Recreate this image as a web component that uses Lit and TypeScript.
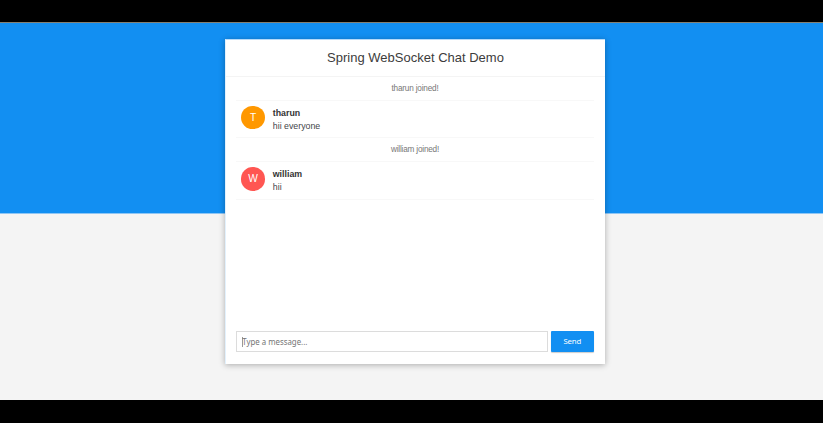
import { LitElement, html, css } from "lit";
import { customElement, state } from "lit/decorators.js";

interface Entry {
  kind: "event" | "chat";
  sender: string;
  text: string;
  tone?: string;
}

@customElement("chat-entry")
class ChatEntry extends LitElement {
  static properties = { entry: { attribute: false } };
  declare entry: Entry;

  static styles = css`
    :host {
      display: block;
      box-sizing: border-box;
      border-bottom: 1px solid #f8f8f8;
    }
    .event {
      height: 23px;
      line-height: 24px;
      text-align: center;
      color: #777;
      font-size: 8.2px;
      letter-spacing: -0.19px;
    }
    .chat {
      height: 36.4px;
      display: flex;
      gap: 8px;
      padding: 5px 5.4px 0;
      box-sizing: border-box;
    }
    .avatar {
      width: 23.4px;
      height: 23.4px;
      border-radius: 50%;
      color: #fff;
      font-size: 10.2px;
      line-height: 23px;
      text-align: center;
    }
    .orange { background: #ff9800; }
    .red { background: #ff5652; }
    .body {
      padding-top: 1px;
      color: #43464b;
      font-size: 8.8px;
      line-height: 13px;
    }
    .name {
      color: #333;
      font-weight: 700;
    }
  `;

  render() {
    const e = this.entry;
    return e.kind === "event"
      ? html`<div class="event">${e.sender} ${e.text}</div>`
      : html`<div class="chat">
          <div class="avatar ${e.tone}">${e.sender[0].toUpperCase()}</div>
          <div class="body">
            <div class="name">${e.sender}</div>
            <div>${e.text}</div>
          </div>
        </div>`;
  }
}

@customElement("app-root")
class AppRoot extends LitElement {
  @state() private entries: Entry[] = [
    { kind: "event", sender: "tharun", text: "joined!" },
    { kind: "chat", sender: "tharun", text: "hii everyone", tone: "orange" },
    { kind: "event", sender: "william", text: "joined!" },
    { kind: "chat", sender: "william", text: "hii", tone: "red" },
  ];

  static styles = css`
    :host {
      display: block;
      box-sizing: border-box;
      height: 423px;
      overflow: hidden;
      background: #000;
      padding: 22px 0 23px;
      font-family: "Liberation Sans", Arial, sans-serif;
    }
    .page {
      box-sizing: border-box;
      height: 378px;
      border-top: 1px solid #838073;
      padding: 16px 0 0 225px;
      background: linear-gradient(#128ff2 190px, #8fc6f4 190px, #8fc6f4 191px, #f4f4f4 191px);
    }
    .card {
      box-sizing: border-box;
      width: 380px;
      height: 325px;
      background: #fff;
      border-top: 1px solid #b5daf9;
      border-left: 1px solid rgba(18, 143, 242, 0.12);
      box-shadow: 0 1px 6px rgba(0, 0, 0, 0.3);
      display: flex;
      flex-direction: column;
    }
    .title {
      height: 36px;
      line-height: 35px;
      border-bottom: 1px solid #f4f4f4;
      text-align: center;
      font-size: 13px;
      color: #3c3c3c;
    }
    .title span {
      display: inline-block;
      transform: scaleY(1.05);
    }
    .list {
      flex: 1;
      padding: 0 11px 0 10px;
    }
    .composer {
      display: flex;
      gap: 3px;
      padding: 0 11px 12px 10px;
      height: 21px;
      font-family: "Noto Sans", sans-serif;
    }
    .field {
      flex: 1;
      box-sizing: border-box;
      border: 1px solid #dcdcdc;
      display: flex;
      align-items: center;
      padding-left: 5px;
      color: #757575;
      font-size: 7.85px;
    }
    .hint {
      transform: scaleY(1.1);
    }
    .caret {
      width: 1px;
      height: 10px;
      margin-right: -0.8px;
      background: #999;
    }
    .send {
      width: 43.5px;
      background: #128ff2;
      border-radius: 1px;
      box-shadow: 0 1px 1px rgba(0, 0, 0, 0.2);
      color: #fff;
      font-size: 7.8px;
      letter-spacing: -0.15px;
      line-height: 21px;
      text-align: center;
    }
  `;

  render() {
    return html`<div class="page">
      <div class="card">
        <div class="title"><span>Spring WebSocket Chat Demo</span></div>
        <div class="list">
          ${this.entries.map((e) => html`<chat-entry .entry=${e}></chat-entry>`)}
        </div>
        <div class="composer">
          <div class="field"><span class="caret"></span><span class="hint">Type a message...</span></div>
          <div class="send">Send</div>
        </div>
      </div>
    </div>`;
  }
}
